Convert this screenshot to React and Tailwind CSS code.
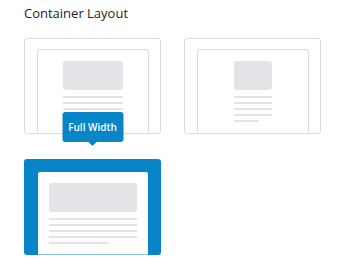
import React from 'react';

const Lines = ({ count = 5 }) => (
  <div className="mt-[6px] flex flex-col gap-[4px]">
    {Array.from({ length: count }).map((_, i) => (
      <div
        key={i}
        className={i === count - 1 ? 'h-[2px] w-[68%] bg-[#e4e4e8]' : 'h-[2px] w-full bg-[#e4e4e8]'}
      />
    ))}
  </div>
);

const LayoutCard = ({ variant, selected }) => {
  if (selected) {
    return (
      <div className="relative h-[96px] rounded-[3px] bg-[#0785c7] flex justify-center items-end overflow-hidden">
        <div className="w-[110px] h-[83px] bg-white rounded-t-[2px] px-[11px] pt-[11px] border-b border-[#8cc6e6]">
          <div className="h-[29px] rounded-[3px] bg-[#e4e4e8]" />
          <Lines />
        </div>
      </div>
    );
  }
  const pad = variant === 'boxed' ? 'px-[25px]' : 'px-[36px]';
  return (
    <div className="h-[96px] rounded-[3px] border border-[#dcdcde] flex justify-center items-end">
      <div className={`w-[112px] h-[84px] border-x border-t border-[#dcdcde] rounded-t-[3px] pt-[11px] ${pad}`}>
        <div className="h-[29px] rounded-[3px] bg-[#e4e4e8]" />
        <Lines />
      </div>
    </div>
  );
};

const App = () => {
  return (
    <div className="w-[340px] h-[272px] bg-white px-[24px] pt-[4px]" style={{ fontFamily: '"Open Sans", sans-serif' }}>
      <h2 className="text-[13px] leading-[18px] text-[#1d2327] font-normal">Container Layout</h2>
      <div className="mt-[16px] grid grid-cols-[137px_137px] gap-x-[23px] gap-y-[25px]">
        <LayoutCard variant="boxed" />
        <LayoutCard variant="contained" />
        <div className="relative">
          <LayoutCard selected />
          <div className="absolute left-1/2 -translate-x-1/2 top-[-47px] flex flex-col items-center">
            <div className="w-[61px] h-[30px] rounded-[3px] bg-[#0785c7] flex items-center justify-center text-white text-[10px] font-semibold">
              Full Width
            </div>
            <div className="w-0 h-0 border-x-[4px] border-x-transparent border-t-[4px] border-t-[#0785c7]" />
          </div>
        </div>
      </div>
    </div>
  );
};

export default App;
